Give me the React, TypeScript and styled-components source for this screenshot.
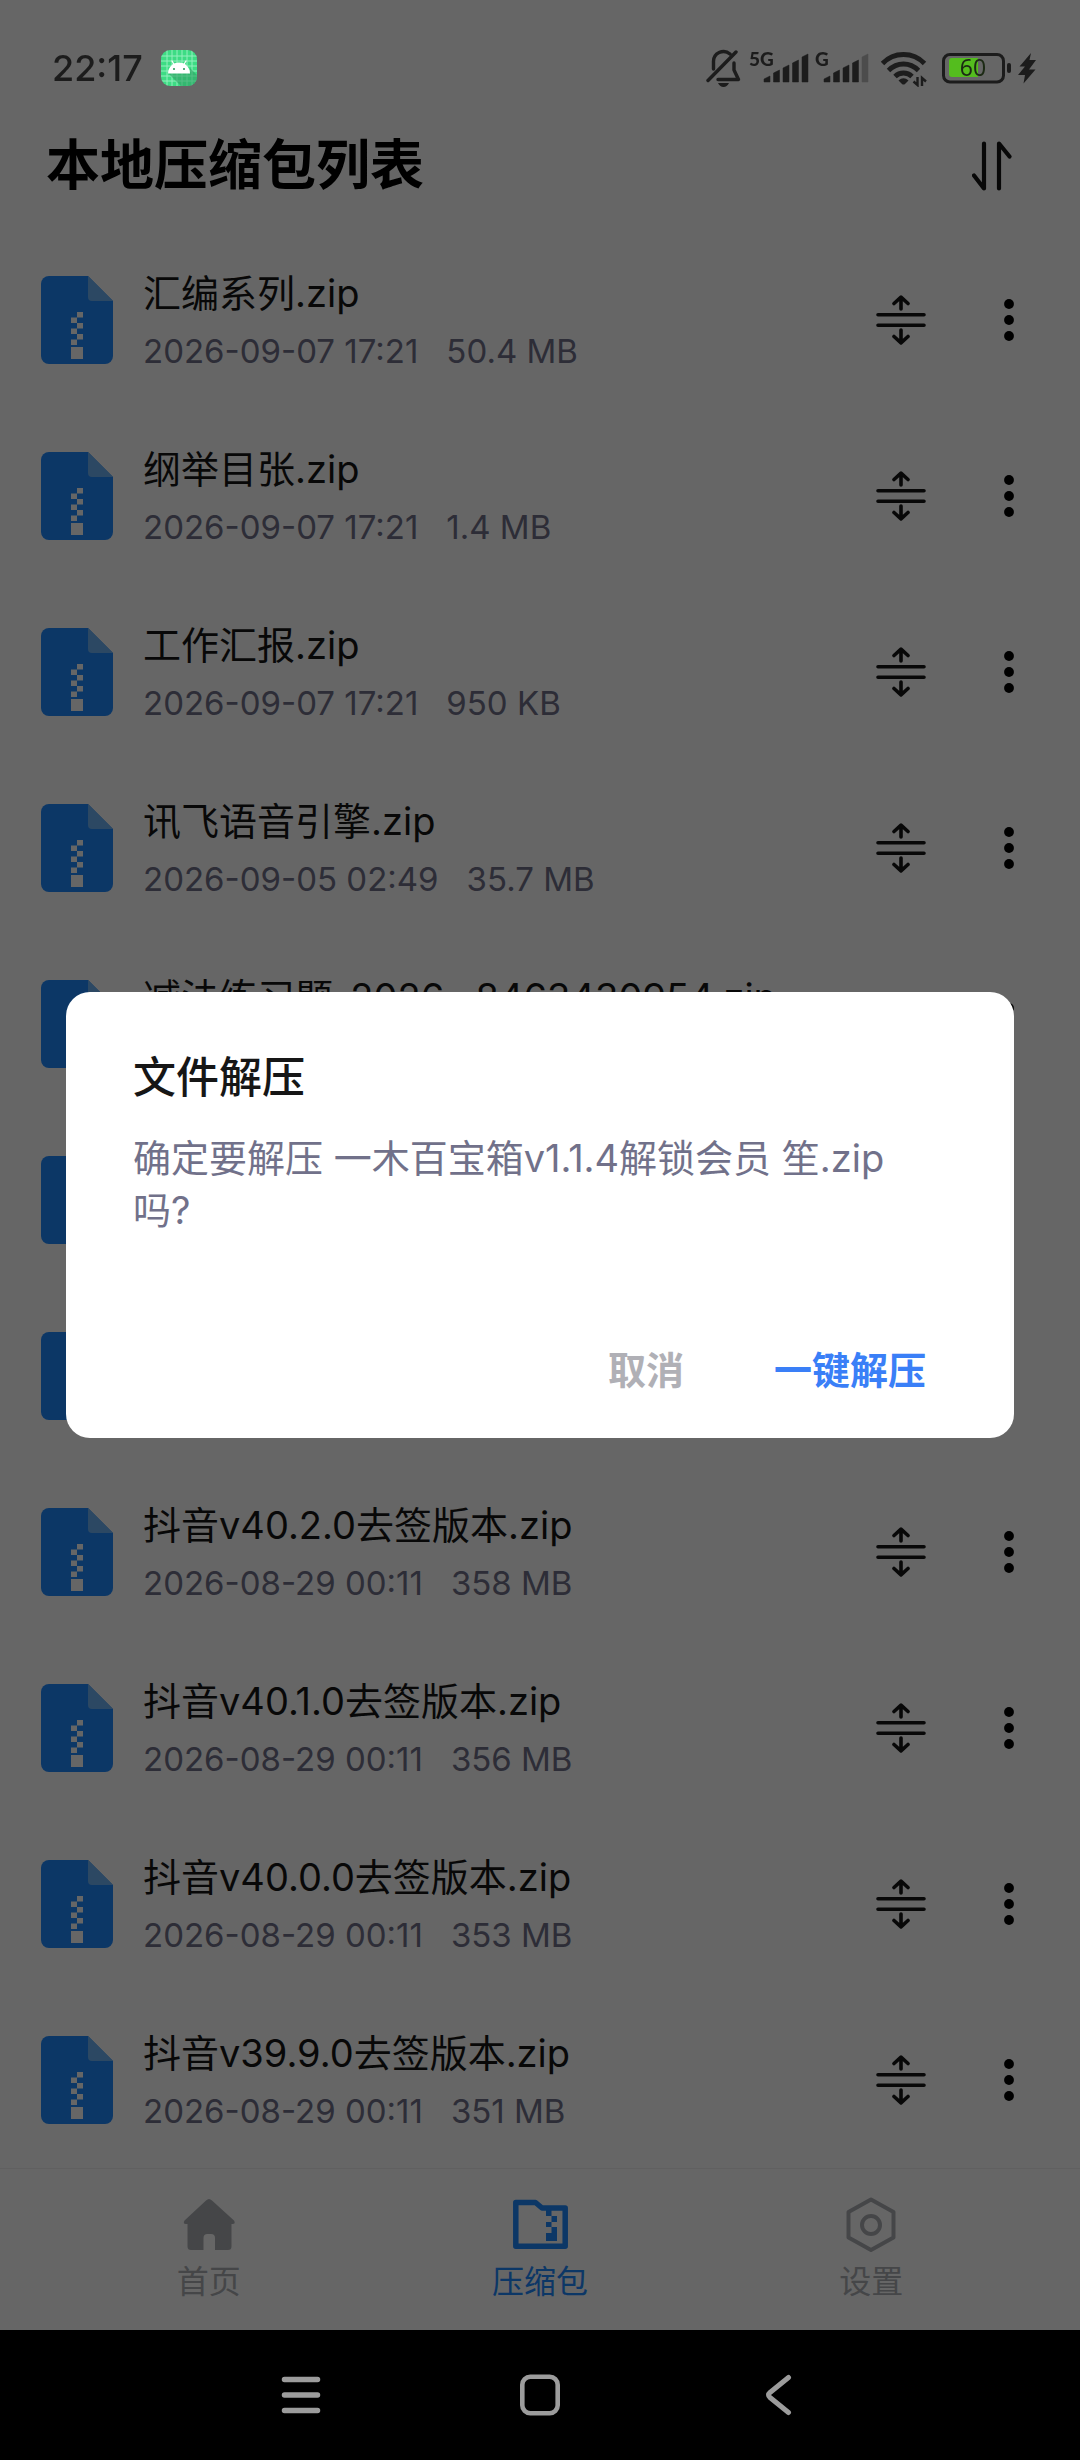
import React from "react";
import styled, { createGlobalStyle } from "styled-components";

const GlobalStyle = createGlobalStyle`
  *, *::before, *::after { box-sizing: border-box; }
  body {
    margin: 0;
    background: #ffffff;
    font-family: Inter, "Noto Sans CJK SC", sans-serif;
    -webkit-font-smoothing: antialiased;
  }
  button {
    margin: 0;
    padding: 0;
    border: 0;
    background: none;
    font: inherit;
    color: inherit;
    cursor: pointer;
  }
  svg { display: block; flex: none; }
`;

const Screen = styled.div`
  display: flex;
  flex-direction: column;
  min-height: 100vh;
`;

const StatusBar = styled.div`
  position: relative;
  z-index: 10;
  display: flex;
  align-items: center;
  justify-content: space-between;
  height: 100px;
  padding: 36px 44px 0 52px;
  color: #1c1c1c;
`;

const StatusGroup = styled.div<{ $gap: number }>`
  display: flex;
  align-items: center;
  gap: ${(p) => p.$gap}px;
`;

const Clock = styled.time`
  font-size: 36px;
  line-height: 44px;
  font-weight: 500;
`;

const Header = styled.header`
  display: flex;
  align-items: center;
  justify-content: space-between;
  height: 132px;
  padding: 0 68px 0 46px;
`;

const PageTitle = styled.h1`
  margin: 0;
  font-size: 54px;
  line-height: 72px;
  font-weight: 700;
  color: #000000;
`;

const FileList = styled.ul`
  flex: 1;
  margin: 0;
  padding: 0;
  list-style: none;
`;

const FileRow = styled.li`
  display: flex;
  align-items: center;
  height: 176px;
  padding: 0 47px 0 41px;
`;

const FileText = styled.div`
  flex: 1;
  min-width: 0;
  padding-left: 30px;
`;

const FileName = styled.div`
  min-height: 56px;
  margin-bottom: 6px;
  font-size: 38px;
  line-height: 56px;
  color: #161616;
  white-space: nowrap;
`;

const FileMeta = styled.div`
  display: flex;
  gap: 28px;
  min-height: 48px;
  font-size: 33px;
  line-height: 48px;
  color: #71718a;
`;

const RowActions = styled.div`
  display: flex;
  align-items: center;
  gap: 59px;
`;

const IconButton = styled.button`
  display: flex;
  align-items: center;
  justify-content: center;
  min-width: 48px;
  min-height: 50px;
`;

const SortButton = styled.button`
  display: flex;
`;

const TabBar = styled.nav`
  display: grid;
  grid-template-columns: repeat(3, 1fr);
  height: 162px;
  padding: 28px 43px 0;
  border-top: 1px solid #f0f0f0;
`;

const Tab = styled.button<{ $active?: boolean }>`
  display: flex;
  flex-direction: column;
  align-items: center;
  gap: 5px;
  font-size: 32px;
  line-height: 48px;
  color: ${(p) => (p.$active ? "#1f8aff" : "#adb0b5")};
`;

const SystemNav = styled.div`
  position: relative;
  z-index: 10;
  display: flex;
  align-items: center;
  justify-content: center;
  gap: 199px;
  height: 130px;
  background: #000000;
  color: #9c9c9c;
`;

const Scrim = styled.div`
  position: fixed;
  inset: 0;
  z-index: 5;
  display: flex;
  align-items: center;
  justify-content: center;
  padding: 100px 66px 130px;
  background: rgba(0, 0, 0, 0.6);
`;

const Dialog = styled.section`
  width: 100%;
  padding: 54px 88px 42px 67px;
  border-radius: 24px;
  background: #ffffff;
`;

const DialogTitle = styled.h2`
  margin: 0 0 24px;
  font-size: 43px;
  line-height: 62px;
  font-weight: 500;
  color: #161616;
`;

const DialogBody = styled.p`
  margin: 0 0 108px;
  font-size: 38px;
  line-height: 52px;
  color: #71718a;
`;

const DialogActions = styled.div`
  display: flex;
  justify-content: flex-end;
  gap: 90px;
`;

const DialogButton = styled.button<{ $primary?: boolean }>`
  font-size: 38px;
  line-height: 52px;
  font-weight: 700;
  color: ${(p) => (p.$primary ? "#3a7ff7" : "#b0b0b6")};
`;

type FileEntry = { name: string; date?: string; size?: string };

const files: FileEntry[] = [
  { name: "汇编系列.zip", date: "2026-09-07 17:21", size: "50.4 MB" },
  { name: "纲举目张.zip", date: "2026-09-07 17:21", size: "1.4 MB" },
  { name: "工作汇报.zip", date: "2026-09-07 17:21", size: "950 KB" },
  { name: "讯飞语音引擎.zip", date: "2026-09-05 02:49", size: "35.7 MB" },
  { name: "减法练习题_2026__8463430954.zip" },
  { name: "" },
  { name: "" },
  { name: "抖音v40.2.0去签版本.zip", date: "2026-08-29 00:11", size: "358 MB" },
  { name: "抖音v40.1.0去签版本.zip", date: "2026-08-29 00:11", size: "356 MB" },
  { name: "抖音v40.0.0去签版本.zip", date: "2026-08-29 00:11", size: "353 MB" },
  { name: "抖音v39.9.0去签版本.zip", date: "2026-08-29 00:11", size: "351 MB" },
];

const AppBadge = () => (
  <svg width="36" height="36" viewBox="0 0 36 36" aria-hidden="true">
    <defs>
      <clipPath id="badge"><rect width="36" height="36" rx="9" /></clipPath>
    </defs>
    <g clipPath="url(#badge)">
      <rect width="36" height="36" fill="#3ddc84" />
      <path
        d="M6 0V36M11 0V36M16 0V36M21 0V36M26 0V36M31 0V36M0 6H36M0 11H36M0 16H36M0 21H36M0 26H36M0 31H36"
        stroke="#93efbd"
        strokeWidth="1"
      />
      <path d="M7 23 L20 36 H36 V25 L29 18 V23Z" fill="#2f9e62" opacity="0.6" />
      <path d="M7 23.500A11 11 0 0 1 29 23.500Z" fill="#ffffff" />
      <path d="M11 11L13.500 15M25 11L22.500 15" stroke="#ffffff" strokeWidth="1.200" strokeLinecap="round" />
      <circle cx="13" cy="19" r="1.100" fill="#2f9e62" />
      <circle cx="23" cy="19" r="1.100" fill="#2f9e62" />
    </g>
  </svg>
);

const MutedBell = () => (
  <svg width="37" height="38" viewBox="706 49 37 38" fill="none" stroke="currentColor" strokeWidth="3.400" strokeLinecap="round" strokeLinejoin="round" aria-hidden="true">
    <path d="M713.500 69V62A10 10 0 0 1 730 54" />
    <path d="M734 63V70L738.500 79.500H718" />
    <path d="M708 80.500L736 52" />
    <path d="M718 83H729Q727 87 723.500 87Q720 87 718 83Z" fill="currentColor" stroke="none" />
  </svg>
);

const barPath = (x: number, top: number) => `M${x} ${top + 3}L${x + 6} ${top}V82H${x}Z`;
const barTops = [76, 70, 65, 60, 54];

const Signal = ({ label, width, offset, bars }: { label: string; width: number; offset: number; bars: number }) => (
  <svg width={width} height="38" viewBox={`0 49 ${width} 38`} aria-hidden="true">
    <text x="0" y="66" fontFamily="Lato, sans-serif" fontSize="19" fontWeight="900" fill="currentColor">{label}</text>
    {barTops.map((top, i) => (
      <path
        key={top}
        d={barPath(offset + i * 9.5, top)}
        fill={i < bars ? "currentColor" : "#4c4c4c"}
        stroke={i < bars ? "currentColor" : "#4c4c4c"}
        strokeWidth="0.500"
        strokeLinejoin="round"
      />
    ))}
  </svg>
);

const Wifi = () => (
  <svg width="52" height="38" viewBox="875 49 52 38" fill="none" stroke="currentColor" strokeWidth="4.800" aria-hidden="true">
    <path d="M882.500 63.500Q891 54.500 903.500 54.500T924.500 63.500" />
    <path d="M888.500 70.500Q895 64 903.500 64T918.500 70.500" />
    <path d="M895 76.500Q898.500 73 903.500 73T912 76.500" />
    <path d="M898.500 80.500Q903.500 76 908.500 80.500L905 84Q903.500 85 902 84Z" fill="currentColor" stroke="none" />
    <path d="M917.500 77V85L913.500 81.500M922 86V78L926 81.500" strokeWidth="2.400" />
  </svg>
);

const Battery = () => (
  <svg width="79" height="38" viewBox="933 49 79 38" aria-hidden="true">
    <rect x="943.500" y="54.500" width="60" height="27.500" rx="6.500" fill="none" stroke="currentColor" strokeWidth="3" />
    <path d="M978 58H952Q949 58 949 61V74Q949 77 952 77H978Z" fill="#54bd1e" />
    <rect x="1007" y="63" width="4" height="10" rx="2" fill="currentColor" />
    <text x="973" y="76" textAnchor="middle" fontFamily="Noto Sans, sans-serif" fontSize="23" fill="#1c2a14">60</text>
  </svg>
);

const Bolt = () => (
  <svg width="18" height="38" viewBox="1018 49 18 38" aria-hidden="true">
    <path d="M1031 53L1019.500 66.500H1025L1018 75H1025L1023.500 83.500L1035.500 69.500H1029L1036 60H1029.500Z" fill="currentColor" />
  </svg>
);

const SortIcon = () => (
  <svg width="40" height="50" viewBox="972 141 40 50" fill="none" stroke="#161616" strokeWidth="4.200" strokeLinecap="round" strokeLinejoin="round" aria-hidden="true">
    <path d="M984 143.500V188.500L974 175.500" />
    <path d="M999 188.500V143.500L1009.500 156.500" />
  </svg>
);

const ZipFileIcon = () => (
  <svg width="72" height="88" viewBox="0 0 72 88" aria-hidden="true">
    <path d="M8 0H47L72 25V80A8 8 0 0 1 64 88H8A8 8 0 0 1 0 80V8A8 8 0 0 1 8 0Z" fill="#1f8aff" />
    <path d="M47 0L72 25H51A4 4 0 0 1 47 21Z" fill="#6eb4f8" />
    <path
      d="M36 36h6v5.500h-6zM30 41.500h6v5.500h-6zM36 47h6v5.500h-6zM30 52.500h6v5.500h-6zM36 58h6v5.500h-6zM30 63.500h6v5.500h-6zM30 71h12v12h-12z"
      fill="#ffffff"
    />
  </svg>
);

const ExtractIcon = () => (
  <svg width="50" height="50" viewBox="876 295 50 50" fill="none" stroke="#161616" strokeWidth="3.600" strokeLinecap="round" strokeLinejoin="round" aria-hidden="true">
    <path d="M878 314.800H924M878 325.200H924" />
    <path d="M901 309V297.500M894 303.500L901 297.200L908 303.500" />
    <path d="M901 330V342.500M894 336.500L901 342.800L908 336.500" />
  </svg>
);

const MoreIcon = () => (
  <svg width="12" height="44" viewBox="0 0 12 44" fill="#000000" aria-hidden="true">
    <circle cx="6" cy="6" r="4.900" />
    <circle cx="6" cy="22" r="4.900" />
    <circle cx="6" cy="38" r="4.900" />
  </svg>
);

const HomeIcon = () => (
  <svg width="56" height="56" viewBox="180 2196 56 56" fill="currentColor" aria-hidden="true">
    <path d="M205 2199.500Q208 2196.500 211 2199.500L233 2219.500Q235 2223 231.500 2223H230.500V2245.500Q230.500 2249 227 2249H214V2237Q214 2233 210 2233H206.500Q202.500 2233 202.500 2237V2249H190Q186.500 2249 186.500 2245.500V2223H185Q181.500 2223 183.500 2219.500Z" />
  </svg>
);

const ArchiveIcon = () => (
  <svg width="56" height="56" viewBox="511 2196 56 56" aria-hidden="true">
    <path d="M514.800 2201.500H534.500L541 2207H564.200V2245.300H514.800Z" fill="none" stroke="currentColor" strokeWidth="5.500" strokeLinejoin="round" />
    <path d="M545 2209h5.500v6h5.500v6h-5.500v5h5.500v14h-11v-8h5.500v-6h-5.500v-5h5.500v-6h-5.500z" fill="currentColor" />
  </svg>
);

const SettingsIcon = () => (
  <svg width="56" height="56" viewBox="0 0 56 56" fill="none" stroke="currentColor" strokeWidth="4" strokeLinejoin="round" aria-hidden="true">
    <path d="M28 2.500L50.500 15V40.500L28 53L5.500 40.500V15Z" />
    <circle cx="28" cy="28" r="9" />
  </svg>
);

const RecentsIcon = () => (
  <svg width="40" height="42" viewBox="0 0 40 42" stroke="currentColor" strokeWidth="5.500" strokeLinecap="round" aria-hidden="true">
    <path d="M3.500 5.500H36.500M3.500 21H36.500M3.500 36.500H36.500" />
  </svg>
);

const HomeNavIcon = () => (
  <svg width="40" height="42" viewBox="0 0 40 42" fill="none" stroke="currentColor" strokeWidth="4.600" aria-hidden="true">
    <rect x="2.300" y="2.800" width="35.400" height="36.400" rx="8" />
  </svg>
);

const BackIcon = () => (
  <svg width="40" height="42" viewBox="759 2374 40 42" fill="none" stroke="currentColor" strokeWidth="5" strokeLinecap="round" strokeLinejoin="round" aria-hidden="true">
    <path d="M788.500 2377.500L770 2392.500Q767 2395 770 2397.500L788.500 2412.500" />
  </svg>
);

export default function App() {
  return (
    <>
      <GlobalStyle />
      <Screen>
        <StatusBar>
          <StatusGroup $gap={18}>
            <Clock>22:17</Clock>
            <AppBadge />
          </StatusGroup>
          <StatusGroup $gap={6}>
            <MutedBell />
            <Signal label="5G" width={60} offset={15} bars={5} />
            <Signal label="G" width={54} offset={9} bars={4} />
            <Wifi />
            <Battery />
            <Bolt />
          </StatusGroup>
        </StatusBar>

        <Header>
          <PageTitle>本地压缩包列表</PageTitle>
          <SortButton aria-label="排序"><SortIcon /></SortButton>
        </Header>

        <FileList>
          {files.map((file, i) => (
            <FileRow key={i}>
              <ZipFileIcon />
              <FileText>
                <FileName>{file.name}</FileName>
                <FileMeta>
                  {file.date && <span>{file.date}</span>}
                  {file.size && <span>{file.size}</span>}
                </FileMeta>
              </FileText>
              <RowActions>
                <IconButton aria-label="解压"><ExtractIcon /></IconButton>
                <IconButton aria-label="更多"><MoreIcon /></IconButton>
              </RowActions>
            </FileRow>
          ))}
        </FileList>

        <TabBar>
          <Tab><HomeIcon />首页</Tab>
          <Tab $active aria-current="page"><ArchiveIcon />压缩包</Tab>
          <Tab><SettingsIcon />设置</Tab>
        </TabBar>

        <SystemNav>
          <button aria-label="最近任务"><RecentsIcon /></button>
          <button aria-label="主屏幕"><HomeNavIcon /></button>
          <button aria-label="返回"><BackIcon /></button>
        </SystemNav>
      </Screen>

      <Scrim>
        <Dialog role="dialog" aria-modal="true" aria-labelledby="dialog-title">
          <DialogTitle id="dialog-title">文件解压</DialogTitle>
          <DialogBody>确定要解压 一木百宝箱v1.1.4解锁会员 笙.zip吗?</DialogBody>
          <DialogActions>
            <DialogButton>取消</DialogButton>
            <DialogButton $primary>一键解压</DialogButton>
          </DialogActions>
        </Dialog>
      </Scrim>
    </>
  );
}
